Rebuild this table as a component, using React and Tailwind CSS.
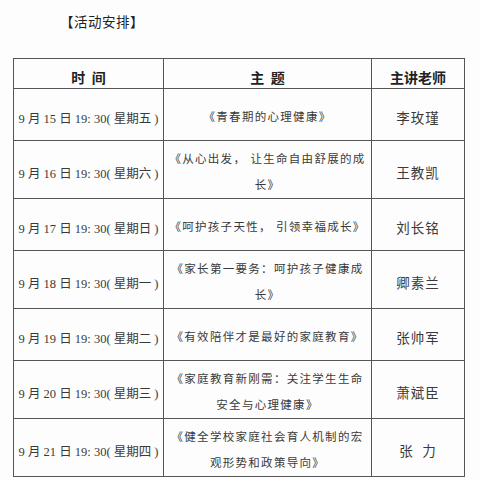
const rows = [
  { date: "9 月 15 日 19: 30( 星期五 )", topic: ["《青春期的心理健康》"], teacher: "李玫瑾", h: "h-[52px]" },
  { date: "9 月 16 日 19: 30( 星期六 )", topic: ["《从心出发， 让生命自由舒展的成", "长》"], teacher: "王教凯", h: "h-[58px]" },
  { date: "9 月 17 日 19: 30( 星期日 )", topic: ["《呵护孩子天性， 引领幸福成长》"], teacher: "刘长铭", h: "h-[52px]" },
  { date: "9 月 18 日 19: 30( 星期一 )", topic: ["《家长第一要务：呵护孩子健康成", "长》"], teacher: "卿素兰", h: "h-[58px]" },
  { date: "9 月 19 日 19: 30( 星期二 )", topic: ["《有效陪伴才是最好的家庭教育》"], teacher: "张帅军", h: "h-[52px]" },
  { date: "9 月 20 日 19: 30( 星期三 )", topic: ["《家庭教育新刚需：关注学生生命", "安全与心理健康》"], teacher: "萧斌臣", h: "h-[58px]" },
  { date: "9 月 21 日 19: 30( 星期四 )", topic: ["《健全学校家庭社会育人机制的宏", "观形势和政策导向》"], teacher: "张  力", h: "h-[56px]" },
];

export default function App() {
  return (
    <div className="w-[480px] h-[480px] bg-[#fdfdfd] text-[#3a3a3a] overflow-hidden font-['Liberation_Serif','Noto_Sans_CJK_SC',serif]">
      <div className="pt-[11px] pl-[60px] h-[58px] text-[13.5px] tracking-[0.5px] text-[#222] font-['Noto_Sans_CJK_SC',sans-serif]">
        【活动安排】
      </div>
      <table className="ml-[13px] border-collapse table-fixed w-[451px]">
        <colgroup>
          <col className="w-[150px]" />
          <col className="w-[208px]" />
          <col className="w-[93px]" />
        </colgroup>
        <thead>
          <tr className="h-[29px]">
            <th className="border-[1.5px] border-[#555] text-[14px] font-bold text-[#222] font-['Noto_Sans_CJK_SC',sans-serif] pt-[8px] pb-0 whitespace-pre">时  间</th>
            <th className="border-[1.5px] border-[#555] text-[14px] font-bold text-[#222] font-['Noto_Sans_CJK_SC',sans-serif] pt-[8px] pb-0 whitespace-pre">主  题</th>
            <th className="border-[1.5px] border-[#555] text-[14px] font-bold text-[#222] font-['Noto_Sans_CJK_SC',sans-serif] pt-[8px] pb-0">主讲老师</th>
          </tr>
        </thead>
        <tbody>
          {rows.map((r) => (
            <tr key={r.date} className={r.h}>
              <td className="border-[1.5px] border-[#555] text-center text-[12.5px] whitespace-pre pt-[9px] pb-0">{r.date}</td>
              <td className="border-[1.5px] border-[#555] text-center text-[11.5px] leading-[26px] tracking-[1.3px] px-0 pt-[5px] pb-0 whitespace-nowrap">
                {r.topic.map((line) => (
                  <div key={line}>{line}</div>
                ))}
              </td>
              <td className="border-[1.5px] border-[#555] text-center text-[13.5px] tracking-[1px] whitespace-pre pt-[9px] pb-0">{r.teacher}</td>
            </tr>
          ))}
        </tbody>
      </table>
    </div>
  );
}
